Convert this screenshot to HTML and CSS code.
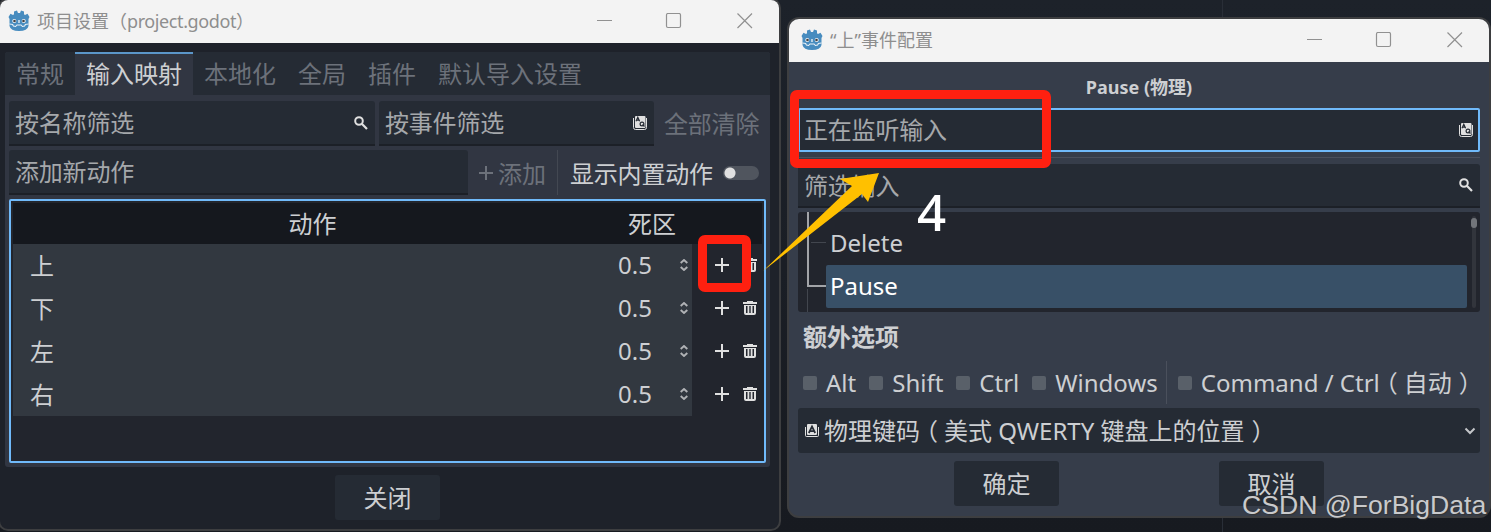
FILE: index.html
```
<!DOCTYPE html>
<html lang="zh-CN">
<head>
    <meta charset="UTF-8">
    <meta name="viewport" content="width=device-width, initial-scale=1.0">
    <title>项目设置（project.godot）</title>
    <link rel="stylesheet" href="styles.css">
</head>
<body>
    <svg class="symbols">
        <symbol id="logo" viewBox="0 0 22 22">
            <path fill="#478cbf" d="M.5 7 L2.500 3.800 L5 5 L6 4.200 L6 1.500 L9 .5 L10 3 H12 L13 .5 L16 1.500 L16 4.200 L17 5 L19.500 3.800 L21.500 7 L20.500 9 V16 Q19.500 21 11 21 Q2.500 21 1.500 16 V9 Z"/>
            <path fill="none" stroke="#fff" stroke-width=".9" d="M1.500 14 L5 14.500 V16 L8 16.500 L8.500 15 H13.500 L14 16.500 L17 16 V14.500 L20.500 14"/>
            <circle cx="6.300" cy="11" r="2" fill="#fff"/>
            <circle cx="15.700" cy="11" r="2" fill="#fff"/>
            <circle cx="6.500" cy="11" r="1.300" fill="#414042"/>
            <circle cx="15.500" cy="11" r="1.300" fill="#414042"/>
            <path stroke="#fff" stroke-width="1.200" d="M11 10 V13"/>
        </symbol>
        <symbol id="search" viewBox="0 0 14 14">
            <circle cx="5" cy="5" r="3.800" fill="none" stroke="#e0e0e0" stroke-width="2"/>
            <path stroke="#e0e0e0" stroke-width="2.200" d="M7.800 7.800 L13 13"/>
        </symbol>
        <symbol id="keys" viewBox="0 0 14 14">
            <path fill="none" stroke="#e0e0e0" d="M.5 2 V11.500 Q.5 13.500 2.500 13.500 H11.500 Q13.500 13.500 13.500 11.500 V2"/>
            <rect x="2" y="0" width="10.500" height="12" rx="1" fill="#e0e0e0"/>
            <path fill="none" stroke="#252b34" stroke-width="1.200" d="M3 5.300 L4.800 1.300 L6.600 5.300 M3.800 4.100 H6"/>
            <circle cx="9" cy="8" r="1.900" fill="none" stroke="#252b34" stroke-width="1.200"/>
            <path stroke="#252b34" stroke-width="1.200" d="M9.500 8.500 L11.500 10.500"/>
        </symbol>
        <symbol id="key" viewBox="0 0 14 14">
            <path fill="none" stroke="#e0e0e0" d="M.5 3 V11.500 Q.5 12.500 1.500 12.500 H12.500 Q13.500 12.500 13.500 11.500 V3"/>
            <rect x="2" y="0" width="10" height="11" rx="1" fill="#e0e0e0"/>
            <path fill="none" stroke="#252b34" stroke-width="1.700" d="M3.800 9 L7 2.500 L10.200 9 M5 7.200 H9"/>
        </symbol>
        <symbol id="plus" viewBox="0 0 14 14">
            <path stroke="currentColor" stroke-width="2" d="M7 0 V14 M0 7 H14"/>
        </symbol>
        <symbol id="trash" viewBox="0 0 14 14">
            <path fill="#e0e0e0" fill-rule="evenodd" d="M4 0 H10 V1 H14 V3 H0 V1 H4 Z M1 4 H13 V12 Q13 14 11 14 H3 Q1 14 1 12 Z M3 5 V12 H4.500 V5 Z M6.300 5 V12 H7.700 V5 Z M9.500 5 V12 H11 V5 Z"/>
        </symbol>
        <symbol id="spin" viewBox="0 0 8 12">
            <path fill="none" stroke="#b0b2b5" stroke-width="1.900" d="M.7 4 L4 1 L7.300 4 M.7 8 L4 11 L7.300 8"/>
        </symbol>
        <symbol id="caption" viewBox="0 0 156 16">
            <path fill="none" stroke="#919191" d="M0 7.500 H15"/>
            <rect x="69.500" y=".5" width="14" height="14" rx="1.500" fill="none" stroke="#919191" stroke-width="1.200"/>
            <path fill="none" stroke="#919191" stroke-width="1.200" d="M140.500 .5 L155 15 M155 .5 L140.500 15"/>
        </symbol>
    </svg>

    <div class="desktop">
        <div class="window settings">
            <div class="titlebar">
                <svg class="logo"><use href="#logo"/></svg>
                <span class="title">项目设置（<span class="file">project.godot</span>）</span>
                <svg class="caption"><use href="#caption"/></svg>
            </div>
            <div class="panel">
                <div class="tabs">
                    <span class="tab">常规</span>
                    <span class="tab active">输入映射</span>
                    <span class="tab">本地化</span>
                    <span class="tab">全局</span>
                    <span class="tab">插件</span>
                    <span class="tab">默认导入设置</span>
                </div>
                <div class="tab-body">
                    <div class="row">
                        <div class="input by-name">按名称筛选<svg class="icon"><use href="#search"/></svg></div>
                        <div class="input by-event">按事件筛选<svg class="icon"><use href="#keys"/></svg></div>
                        <span class="clear-all">全部清除</span>
                    </div>
                    <div class="row second">
                        <div class="input new-action">添加新动作</div>
                        <span class="add"><svg class="icon"><use href="#plus"/></svg>添加</span>
                        <span class="show-builtin">显示内置动作<span class="toggle"></span></span>
                    </div>
                    <div class="actions">
                        <div class="line header"><span>动作</span><span>死区</span><span></span></div>
                        <div class="line"><span class="name">上</span><span class="zone">0.5<svg class="spin"><use href="#spin"/></svg></span><span class="tools"><svg class="icon"><use href="#plus"/></svg><svg class="icon"><use href="#trash"/></svg></span></div>
                        <div class="line"><span class="name">下</span><span class="zone">0.5<svg class="spin"><use href="#spin"/></svg></span><span class="tools"><svg class="icon"><use href="#plus"/></svg><svg class="icon"><use href="#trash"/></svg></span></div>
                        <div class="line"><span class="name">左</span><span class="zone">0.5<svg class="spin"><use href="#spin"/></svg></span><span class="tools"><svg class="icon"><use href="#plus"/></svg><svg class="icon"><use href="#trash"/></svg></span></div>
                        <div class="line"><span class="name">右</span><span class="zone">0.5<svg class="spin"><use href="#spin"/></svg></span><span class="tools"><svg class="icon"><use href="#plus"/></svg><svg class="icon"><use href="#trash"/></svg></span></div>
                    </div>
                </div>
            </div>
            <div class="button close">关闭</div>
        </div>

        <div class="window event">
            <div class="titlebar">
                <svg class="logo"><use href="#logo"/></svg>
                <span class="title">“上”事件配置</span>
                <svg class="caption"><use href="#caption"/></svg>
            </div>
            <div class="content">
                <div class="event-name">Pause (物理)</div>
                <div class="input listening">正在监听输入<svg class="icon"><use href="#keys"/></svg></div>
                <div class="divider"></div>
                <div class="input filter">筛选输入<svg class="icon"><use href="#search"/></svg></div>
                <div class="tree">
                    <svg class="branches">
                        <path stroke="#42464e" d="M9.500 77 V100 M13 30.500 H28"/>
                        <path fill="none" stroke="#a2a4a8" stroke-width="2" d="M10 0 V74 H28"/>
                    </svg>
                    <div class="keys">
                        <div class="key">Delete</div>
                        <div class="key selected">Pause</div>
                    </div>
                    <div class="scroll"><div class="grabber"></div></div>
                </div>
                <div class="extra">额外选项</div>
                <div class="mods">
                    <span class="mod">Alt</span>
                    <span class="mod">Shift</span>
                    <span class="mod">Ctrl</span>
                    <span class="mod">Windows</span>
                    <span class="mod command">Command / Ctrl<span class="open">（</span>自动<span class="shut">）</span></span>
                </div>
                <div class="select">
                    <svg class="icon"><use href="#key"/></svg>
                    <span>物理键码<span class="open">（</span>美式 QWERTY 键盘上的位置<span class="shut">）</span></span>
                    <svg class="arrow" viewBox="0 0 12 8"><path fill="none" stroke="#c4c6c9" stroke-width="2" d="M1.500 1.500 L6 6 L10.500 1.500"/></svg>
                </div>
                <div class="buttons">
                    <div class="button">确定</div>
                    <div class="button">取消</div>
                </div>
            </div>
        </div>

        <!-- Annotations over both windows -->
        <div class="mark mark-plus"></div>
        <div class="mark mark-input"></div>
        <svg class="arrow-mark" viewBox="0 0 120 102">
            <path fill="#ffc000" d="M2 101 L91 16 L79 9 L118 3 L107 32 L101 24 Z"/>
        </svg>
        <span class="step">4</span>
        <span class="watermark">CSDN @ForBigData</span>
    </div>
</body>
</html>
```
FILE: styles.css
```
:root {
    --base: #363d4a;
    --panel: #313642;
    --dark: #252b34;
    --text: #cdcfd2;
    --hint: #a5a8ab;
    --disabled: #6c717a;
    --focus: #70bafa;
}

* {
    box-sizing: border-box;
}

body {
    margin: 0;
    font-family: "Noto Sans", "Noto Sans CJK SC", sans-serif;
    font-size: 24px;
    color: var(--text);
}

svg {
    display: block;
    flex: none;
}

.symbols {
    position: absolute;
    width: 0;
    height: 0;
}

.desktop {
    position: relative;
    width: 1491px;
    height: 532px;
    overflow: hidden;
    background: linear-gradient(90deg, transparent 1222px, #292e37 1222px, #292e37 1223px, transparent 1223px), linear-gradient(#1d222a, #171a20);
}

.window {
    position: absolute;
    overflow: hidden;
    border: 2px solid #3d3e40;
    display: flex;
    flex-direction: column;
}

.settings {
    left: -2px;
    top: -2px;
    width: 783px;
    height: 533px;
    border-radius: 10px;
    background: #1e222a;
}

.event {
    left: 787px;
    top: 17px;
    width: 704px;
    height: 501px;
    border-radius: 12px;
    background: var(--base);
}

.titlebar {
    flex: none;
    display: flex;
    align-items: center;
    height: 43px;
    padding: 0 26px 2px 8px;
    background: #f3f3f3;
    color: #8e8e8e;
    font-size: 18px;
}

.event .titlebar {
    padding-left: 12px;
}

.logo {
    width: 22px;
    height: 22px;
    margin-right: 7px;
}

.title {
    flex: 1;
    padding-bottom: 2px;
    white-space: nowrap;
}

.file {
    letter-spacing: -0.4px;
}

.caption {
    width: 156px;
    height: 16px;
}

.icon {
    width: 14px;
    height: 14px;
}

.panel {
    width: 765px;
    height: 415px;
    margin: 9px 0 0 5px;
    background: var(--panel);
    border-radius: 3px;
    overflow: hidden;
}

.tabs {
    display: flex;
    height: 43px;
    background: var(--dark);
    color: var(--disabled);
}

.tab {
    padding: 0 11px;
    line-height: 44px;
}

.tab.active {
    border-top: 2px solid #5b96c9;
    line-height: 40px;
    background: var(--panel);
    color: var(--text);
}

.tab-body {
    padding: 6px 4px 0;
}

.row {
    display: flex;
    gap: 4px;
    height: 45px;
}

.second {
    margin-top: 4px;
}

.input {
    display: flex;
    align-items: center;
    justify-content: space-between;
    height: 45px;
    padding: 0 7px 0 6px;
    background: var(--dark);
    border-bottom: 2px solid #1c2027;
    border-radius: 3px 3px 0 0;
    color: var(--hint);
    line-height: 41px;
    letter-spacing: -0.2px;
}

.by-name {
    width: 366px;
}

.by-event {
    width: 275px;
}

.clear-all {
    padding-left: 6px;
    line-height: 46px;
    letter-spacing: -0.2px;
    color: var(--disabled);
}

.new-action {
    width: 459px;
}

.add {
    display: flex;
    align-items: center;
    gap: 5px;
    width: 86px;
    padding-left: 7px;
    border-right: 1px solid #434852;
    color: var(--disabled);
}

.show-builtin {
    display: flex;
    align-items: center;
    gap: 10px;
    padding-left: 8px;
    letter-spacing: -0.2px;
}

.toggle {
    width: 36px;
    height: 14px;
    border-radius: 7px;
    background: radial-gradient(circle at 7px 7px, #e0e0e0 5px, transparent 6px), #50555e;
}

.actions {
    height: 264px;
    margin-top: 4px;
    padding: 2px;
    border: 2px solid var(--focus);
    border-radius: 2px;
    background: #22252d;
}

.line {
    display: grid;
    grid-template-columns: 599px 80px 74px;
    height: 43px;
    line-height: 43px;
}

.header {
    height: 41px;
    line-height: 41px;
    background: #15181e;
    text-align: center;
}

.name,
.zone {
    background: #323840;
}

.name {
    padding-left: 17px;
}

.zone {
    display: flex;
    align-items: center;
    justify-content: space-between;
    padding: 0 4px 0 6px;
    line-height: 38px;
}

.zone,
.tools {
    height: 43px;
    padding-bottom: 2px;
}

.spin {
    width: 8px;
    height: 12px;
}

.tools {
    display: flex;
    align-items: center;
    gap: 14px;
    padding-left: 23px;
    color: #e0e0e0;
}

.button {
    width: 105px;
    height: 45px;
    line-height: 46px;
    text-align: center;
    background: var(--dark);
    border-radius: 3px;
}

.close {
    margin: 8px 0 0 335px;
}

.content {
    padding: 0 9px;
}

.event-name {
    height: 46px;
    padding-top: 2px;
    line-height: 46px;
    font-size: 18px;
    font-weight: 700;
    text-align: center;
}

.listening {
    height: 44px;
    padding: 0 5px 0 4px;
    border: 2px solid var(--focus);
    border-radius: 2px;
    line-height: 38px;
}

.filter {
    height: 44px;
}

.divider {
    height: 1px;
    margin: 5px 0 6px;
    background: #4a505c;
}

.tree {
    display: flex;
    height: 100px;
    margin-top: 4px;
    background: #22252d;
    border-radius: 3px;
}

.branches {
    width: 28px;
    height: 100px;
}

.keys {
    flex: 1;
    padding-top: 10px;
}

.key {
    height: 43px;
    padding-left: 4px;
    line-height: 41px;
}

.selected {
    background: #385067;
    border-radius: 2px;
    color: #fff;
}

.scroll {
    width: 4px;
    height: 92px;
    margin: 4px 4px 0 5px;
    border-radius: 2px;
    background: #32353c;
}

.grabber {
    width: 6px;
    height: 10px;
    margin: 2px 0 0 -1px;
    border-radius: 3px;
    background: #72757a;
}

.extra {
    height: 49px;
    padding-left: 5px;
    line-height: 50px;
    font-weight: 700;
}

.mods {
    display: flex;
    height: 43px;
    padding-left: 5px;
    line-height: 42px;
    white-space: nowrap;
}

.mod {
    display: flex;
    align-items: center;
    margin-right: 13px;
}

.mod::before {
    content: "";
    width: 14px;
    height: 14px;
    margin-right: 9px;
    background: #596069;
    border-radius: 2px;
}

.command {
    margin: 0 0 0 -5px;
    padding-left: 11px;
    border-left: 1px solid #4a505c;
}

/* full-width brackets sit in the middle of their box */
.open {
    margin: 0 6px 0 -6px;
}

.shut {
    margin: 0 -7px 0 7px;
}

.select {
    display: flex;
    align-items: center;
    gap: 5px;
    height: 45px;
    margin-top: 4px;
    padding: 0 4px 0 7px;
    background: var(--dark);
    border-radius: 3px;
    line-height: 43px;
    white-space: nowrap;
}

.arrow {
    width: 12px;
    height: 8px;
    margin-left: auto;
}

.buttons {
    display: flex;
    justify-content: center;
    gap: 160px;
    padding-top: 8px;
}

.mark {
    position: absolute;
    border: 9px solid #ff2010;
    border-radius: 7px;
}

.mark-plus {
    left: 698px;
    top: 235px;
    width: 53px;
    height: 57px;
}

.mark-input {
    left: 790px;
    top: 90px;
    width: 261px;
    height: 78px;
}

.arrow-mark {
    position: absolute;
    left: 761px;
    top: 170px;
    width: 120px;
    height: 102px;
}

.step {
    position: absolute;
    left: 917px;
    top: 177px;
    font-size: 51px;
    font-weight: 500;
    line-height: 68px;
    color: #fff;
}

.watermark {
    position: absolute;
    left: 1242px;
    top: 488px;
    font-family: "Liberation Sans", sans-serif;
    font-size: 26.6px;
    line-height: 34px;
    color: #c9cacc;
    text-shadow: 1px 1px 1px #333;
}
```
